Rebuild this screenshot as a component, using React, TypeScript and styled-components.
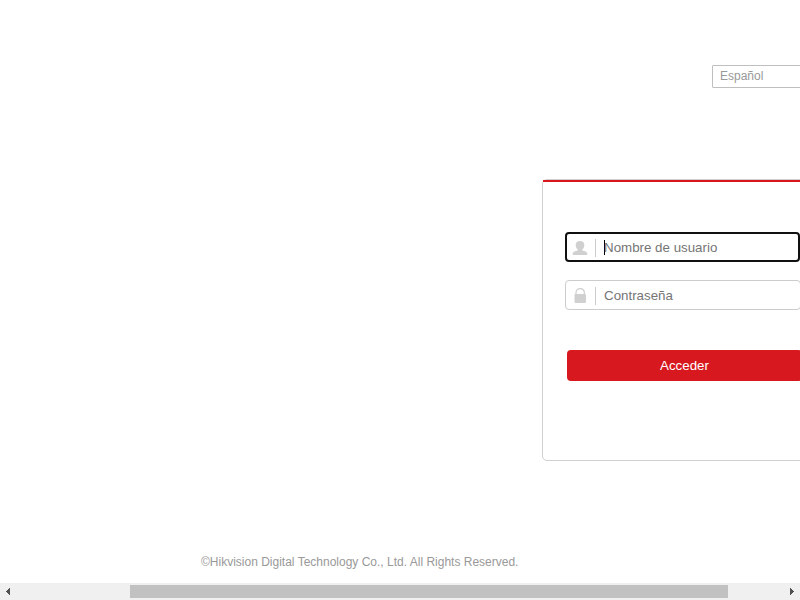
import React from "react";
import styled, { createGlobalStyle } from "styled-components";

const GlobalStyle = createGlobalStyle`
  * { box-sizing: border-box; }
  html, body { margin: 0; padding: 0; background: #fff; overflow: hidden; }
  body, input, button { font-family: "Liberation Sans", Arial, sans-serif; }
`;

const Window = styled.div`
  width: 800px;
  height: 600px;
  display: flex;
  flex-direction: column;
  overflow: hidden;
`;

const Page = styled.main`
  flex: 1;
  min-height: 0;
  display: flex;
  flex-direction: column;
  overflow: hidden;
`;

const LanguageBar = styled.header`
  height: 179px;
  flex: none;
  padding: 65px 0 0 712px;
`;

const LanguageSelect = styled.div`
  width: 120px;
  height: 23px;
  border: 1px solid #bfbfbf;
  border-radius: 1px;
  padding-left: 7px;
  font-size: 12px;
  line-height: 20px;
  color: #999;
`;

const LoginPanel = styled.form`
  flex: none;
  width: 282px;
  height: 282px;
  margin-left: 542px;
  border: 1px solid #d0d0d0;
  border-radius: 5px;
  display: flex;
  flex-direction: column;
`;

const Accent = styled.div`
  height: 2px;
  flex: none;
  background: #d9161e;
`;

const Fields = styled.div`
  display: flex;
  flex-direction: column;
  gap: 18px;
  padding: 50px 0 0 22px;
`;

const Field = styled.label<{ $focused?: boolean }>`
  width: ${(p) => (p.$focused ? 235 : 236)}px;
  height: 30px;
  display: flex;
  align-items: center;
  border: ${(p) => (p.$focused ? "2px solid #101010" : "1px solid #ccc")};
  border-radius: 4px;
  padding: 2px 0 0 ${(p) => (p.$focused ? 5 : 6)}px;
`;

const FieldIcon = styled.svg`
  width: 16px;
  height: 16px;
  flex: none;
  fill: #d0d0d0;
`;

const Divider = styled.span`
  width: 1px;
  height: 18px;
  margin: 0 8px 0 7px;
  background: #ccc;
`;

const Caret = styled.span`
  width: 1px;
  height: 15px;
  margin: 0 -1px 1px 0;
  background: #000;
`;

const Placeholder = styled.span`
  font-size: 13.333px;
  line-height: 16px;
  white-space: nowrap;
  color: #757575;
`;

const LoginButton = styled.button`
  width: 235px;
  height: 31px;
  flex: none;
  margin: 40px 0 0 24px;
  padding: 0;
  border: 0;
  border-radius: 4px;
  background: #d7191f;
  color: #fff;
  font-size: 13.333px;
  line-height: 31px;
`;

const Copyright = styled.footer`
  margin: 94px 0 0 201px;
  font-size: 12px;
  line-height: 14px;
  white-space: nowrap;
  color: #999;
`;

const Scrollbar = styled.div`
  flex: none;
  height: 17px;
  display: flex;
  align-items: center;
  background: #f0f0f0;
`;

const Arrow = styled.svg`
  width: 17px;
  height: 17px;
  flex: none;
  fill: #505050;
`;

const Track = styled.div`
  flex: 1;
  height: 13px;
  padding: 0 55px 0 113px;
`;

const Thumb = styled.div`
  height: 13px;
  background: #c1c1c1;
`;

export default function App() {
  return (
    <Window>
      <GlobalStyle />
      <Page>
        <LanguageBar>
          <LanguageSelect>Español</LanguageSelect>
        </LanguageBar>
        <LoginPanel>
          <Accent />
          <Fields>
            <Field $focused>
              <FieldIcon viewBox="0 0 16 16">
                <path d="M8 1C5.3 1 3.7 2.6 3.7 5c0 2.2.9 3.6 2 4.6v.9C3.4 11.3.8 11.5.8 13.6V15h14.4v-1.4c0-2.1-2.6-2.3-4.9-3.1v-.9c1.1-1 2-2.4 2-4.6 0-2.4-1.6-4-4.3-4z" />
              </FieldIcon>
              <Divider />
              <Caret />
              <Placeholder>Nombre de usuario</Placeholder>
            </Field>
            <Field>
              <FieldIcon viewBox="0 0 16 16">
                <path d="M4 7V4.7a4.2 4.2 0 0 1 8.4 0V7" fill="none" stroke="#d0d0d0" strokeWidth="1.3" />
                <rect x="2.5" y="6" width="11.5" height="9" rx="1.3" />
              </FieldIcon>
              <Divider />
              <Placeholder>Contraseña</Placeholder>
            </Field>
          </Fields>
          <LoginButton type="button">Acceder</LoginButton>
        </LoginPanel>
        <Copyright>©Hikvision Digital Technology Co., Ltd. All Rights Reserved.</Copyright>
      </Page>
      <Scrollbar>
        <Arrow viewBox="0 0 17 17" shapeRendering="crispEdges">
          <path d="M10 5v7L6 8.5z" />
        </Arrow>
        <Track>
          <Thumb />
        </Track>
        <Arrow viewBox="0 0 17 17" shapeRendering="crispEdges">
          <path d="M7 5v7l4-3.5z" />
        </Arrow>
      </Scrollbar>
    </Window>
  );
}
